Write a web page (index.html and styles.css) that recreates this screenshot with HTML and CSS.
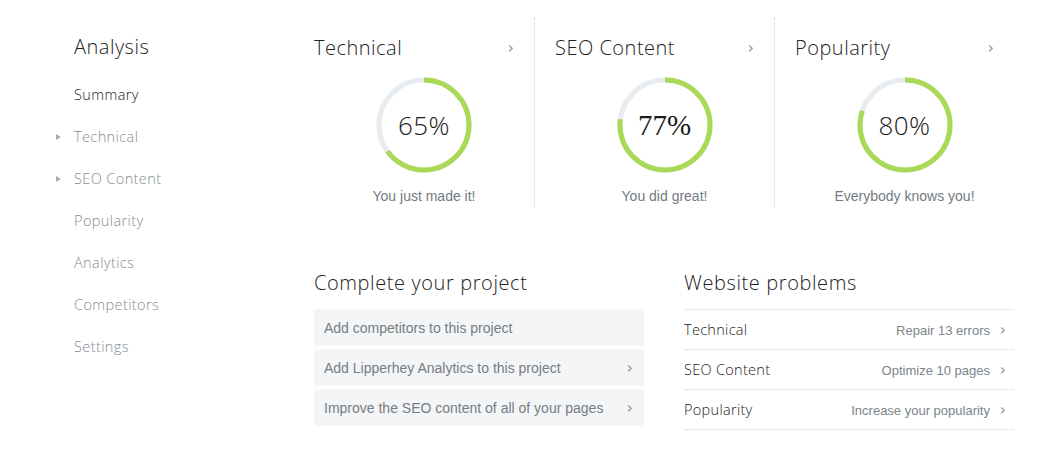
FILE: index.html
```html
<!DOCTYPE html>
<html lang="en">
<head>
    <meta charset="UTF-8">
    <title>Analysis</title>
    <link rel="stylesheet" href="styles.css">
</head>
<body>

<div class="page">
    <nav class="sidebar">
        <h2 class="sidebar-title">Analysis</h2>
        <ul class="menu">
            <li class="active">Summary</li>
            <li class="has-sub">Technical</li>
            <li class="has-sub">SEO Content</li>
            <li>Popularity</li>
            <li>Analytics</li>
            <li>Competitors</li>
            <li>Settings</li>
        </ul>
    </nav>

    <main class="content">
        <section class="scores">
            <div class="score">
                <div class="score-head">
                    <h3>Technical</h3>
                    <span class="chev">›</span>
                </div>
                <div class="ring">
                    <svg width="96" height="96" viewBox="0 0 96 96">
                        <circle class="track" cx="48" cy="48" r="45"></circle>
                        <circle class="bar" cx="48" cy="48" r="45" style="stroke-dasharray: 183.8 282.8"></circle>
                    </svg>
                    <span class="pct">65%</span>
                </div>
                <p class="caption">You just made it!</p>
            </div>
            <div class="score">
                <div class="score-head">
                    <h3>SEO Content</h3>
                    <span class="chev">›</span>
                </div>
                <div class="ring">
                    <svg width="96" height="96" viewBox="0 0 96 96">
                        <circle class="track" cx="48" cy="48" r="45"></circle>
                        <circle class="bar" cx="48" cy="48" r="45" style="stroke-dasharray: 217.7 282.8"></circle>
                    </svg>
                    <span class="pct serif">77%</span>
                </div>
                <p class="caption">You did great!</p>
            </div>
            <div class="score">
                <div class="score-head">
                    <h3>Popularity</h3>
                    <span class="chev">›</span>
                </div>
                <div class="ring">
                    <svg width="96" height="96" viewBox="0 0 96 96">
                        <circle class="track" cx="48" cy="48" r="45"></circle>
                        <circle class="bar" cx="48" cy="48" r="45" style="stroke-dasharray: 226.2 282.8"></circle>
                    </svg>
                    <span class="pct">80%</span>
                </div>
                <p class="caption">Everybody knows you!</p>
            </div>
        </section>

        <section class="lower">
            <div class="project">
                <h3 class="block-title">Complete your project</h3>
                <div class="task">Add competitors to this project</div>
                <div class="task">Add Lipperhey Analytics to this project <span class="chev">›</span></div>
                <div class="task">Improve the SEO content of all of your pages <span class="chev">›</span></div>
            </div>
            <div class="problems">
                <h3 class="block-title">Website problems</h3>
                <ul class="problem-list">
                    <li><span class="label">Technical</span><span class="action">Repair 13 errors <span class="chev">›</span></span></li>
                    <li><span class="label">SEO Content</span><span class="action">Optimize 10 pages <span class="chev">›</span></span></li>
                    <li><span class="label">Popularity</span><span class="action">Increase your popularity <span class="chev">›</span></span></li>
                </ul>
            </div>
        </section>
    </main>
</div>

</body>
</html>
```
FILE: styles.css
```css
body {
    margin: 0;
    background: #ffffff;
    font-family: "Liberation Sans", Arial, sans-serif;
    color: #333;
}

h2, h3, p, ul {
    margin: 0;
    padding: 0;
    font-weight: 400;
}

ul {
    list-style: none;
}

.page {
    display: flex;
    padding: 18px 0 0 74px;
}

/* sidebar */
.sidebar {
    width: 240px;
    padding-top: 15px;
}

.sidebar-title {
    font-family: "Open Sans", sans-serif;
    font-weight: 300;
    font-size: 20px;
    letter-spacing: 0.5px;
    line-height: 28px;
    color: #222;
    margin-bottom: 24px;
}

.menu li {
    position: relative;
    font-family: "Open Sans", sans-serif;
    font-weight: 300;
    font-size: 14.5px;
    letter-spacing: 0.4px;
    line-height: 20px;
    color: #868d93;
    margin-bottom: 22px;
}

.menu li.active {
    color: #222;
}

.menu li.has-sub::before {
    content: "";
    position: absolute;
    left: -18px;
    top: 7px;
    border-left: 5px solid #a8adb2;
    border-top: 3.5px solid transparent;
    border-bottom: 3.5px solid transparent;
}

/* score columns */
.content {
    width: 700px;
}

.scores {
    display: grid;
    grid-template-columns: 220px 240px 240px;
}

.score {
    padding-left: 20px;
    height: 190px;
    border-left: 1px dotted #cfd3d6;
}

.score:first-child {
    padding-left: 0;
    border-left: none;
}

.score-head {
    display: flex;
    justify-content: space-between;
    align-items: center;
    height: 28px;
    margin-top: 15px;
    padding-right: 20px;
}

.score-head h3 {
    font-family: "Open Sans", sans-serif;
    font-weight: 300;
    font-size: 20px;
    letter-spacing: 0.5px;
    color: #222;
}

.chev {
    font-family: "DejaVu Sans", sans-serif;
    font-size: 16px;
    color: #8d949a;
}

.ring {
    position: relative;
    width: 96px;
    height: 96px;
    margin: 16px auto 0;
}

.ring svg {
    display: block;
    transform: rotate(-90deg);
}

.track {
    fill: none;
    stroke: #e7ecf0;
    stroke-width: 5;
}

.bar {
    fill: none;
    stroke: #a9d957;
    stroke-width: 5;
}

.pct {
    position: absolute;
    inset: 0;
    display: flex;
    align-items: center;
    justify-content: center;
    font-family: "Open Sans", sans-serif;
    font-weight: 300;
    font-size: 26px;
    letter-spacing: 0.5px;
    color: #1a1a1a;
}

.pct.serif {
    font-family: "Liberation Serif", serif;
    font-weight: 400;
    font-size: 29px;
    letter-spacing: 0;
}

.caption {
    text-align: center;
    font-size: 14px;
    color: #737b82;
    margin-top: 15px;
}

/* lower blocks */
.lower {
    display: grid;
    grid-template-columns: 330px 330px;
    column-gap: 40px;
    margin-top: 63px;
}

.block-title {
    font-family: "Open Sans", sans-serif;
    font-weight: 300;
    font-size: 20px;
    letter-spacing: 0.6px;
    line-height: 24px;
    color: #222;
    margin-bottom: 14px;
}

.task {
    display: flex;
    justify-content: space-between;
    align-items: center;
    height: 37px;
    padding: 0 10px;
    margin-bottom: 3px;
    background: #f4f5f7;
    border-radius: 3px;
    font-size: 14px;
    color: #757d84;
}

.project .task:first-of-type {
    margin-top: 1px;
}

.task .chev {
    margin-right: 1px;
}

.problem-list {
    border-top: 1px solid #e8eaec;
}

.problem-list li {
    display: flex;
    justify-content: space-between;
    align-items: center;
    height: 39px;
    border-bottom: 1px dotted #cfd3d6;
}

.label {
    font-family: "Open Sans", sans-serif;
    font-weight: 300;
    font-size: 14.5px;
    letter-spacing: 0.3px;
    color: #222;
}

.action {
    font-size: 13px;
    color: #7d848a;
    margin-right: 8px;
}

.action .chev {
    margin-left: 6px;
}
```
